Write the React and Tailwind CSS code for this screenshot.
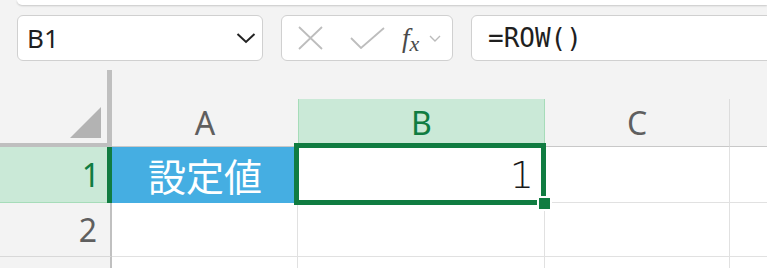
import React from 'react';

const ColHeader = ({ label, width, active, last }) => (
  <div className={`flex flex-col justify-end h-[77px] ${width}`}>
    <div
      className={`h-[48px] flex items-center justify-center border-b text-[32px] leading-none ${
        active
          ? 'bg-[#cae9d7] text-[#107c41] border-x border-x-[#a6dcb9] border-b-[#c8c8c8]'
          : last
          ? 'text-[#5f5f5f] border-r border-r-[#dcdcdc] border-b-[#c8c8c8]'
          : 'text-[#5f5f5f] border-b-[#c8c8c8]'
      }`}
    >
      {label}
    </div>
  </div>
);

export default function App() {
  return (
    <div className="relative w-[767px] h-[268px] overflow-hidden bg-[#f3f3f3] font-['Noto_Sans',sans-serif]">
      {/* top ribbon edge */}
      <div className="ml-[17px] h-[5px] bg-white rounded-bl-[10px] shadow-[0_1px_2px_rgba(0,0,0,0.18)]" />

      {/* formula bar */}
      <div className="flex gap-[18px] ml-[17px] mt-[10px] h-[46px]">
        <div className="w-[246px] shrink-0 flex items-center justify-between pl-[9px] pr-[6px] bg-white border-[1.5px] border-[#d0d0d0] rounded-[6px]">
          <span className="text-[26px] text-[#1f1f1f] leading-none">B1</span>
          <svg width="20" height="12" viewBox="0 0 20 12" fill="none">
            <path d="M1.5 2 L10 10 L18.5 2" stroke="#222" strokeWidth="2" />
          </svg>
        </div>
        <div className="w-[172px] shrink-0 flex items-center pl-[16px] bg-white border-[1.5px] border-[#d0d0d0] rounded-[6px]">
          <svg width="25" height="24" viewBox="0 0 25 24" fill="none">
            <path d="M1 1 L24 23 M24 1 L1 23" stroke="#bdbdbd" strokeWidth="1.8" />
          </svg>
          <svg className="ml-[27px]" width="35" height="22" viewBox="0 0 35 22" fill="none">
            <path d="M1 11 L11 21 L34 1" stroke="#bdbdbd" strokeWidth="1.8" />
          </svg>
          <span className="ml-[17px] font-['Liberation_Serif',serif] italic text-[27px] text-[#4a4a4a] leading-none">
            f<span className="text-[22px] relative top-[4px]">x</span>
          </span>
          <svg className="ml-[10px]" width="12" height="7" viewBox="0 0 12 7" fill="none">
            <path d="M1 1 L6 6 L11 1" stroke="#bbbbbb" strokeWidth="1.4" />
          </svg>
        </div>
        <div className="w-[330px] shrink-0 flex items-center pl-[16px] bg-white border-[1.5px] border-[#d0d0d0] rounded-[6px]">
          <span className="font-['DejaVu_Sans_Mono',monospace] text-[26px] text-[#1f1f1f] leading-none">=ROW()</span>
        </div>
      </div>

      {/* grid */}
      <div className="relative mt-[9px]">
        {/* header row */}
        <div className="flex">
          <div className="w-[112px] h-[77px] shrink-0 flex items-end justify-end pr-[6px] pb-[5px] border-r-[5px] border-b-[4px] border-[#bfbfbf]">
            <svg width="31" height="31" viewBox="0 0 31 31">
              <path d="M0 31 L31 31 L31 0 Z" fill="#b3b3b3" />
            </svg>
          </div>
          <ColHeader label="A" width="w-[186px]" />
          <ColHeader label="B" width="w-[247px]" active />
          <ColHeader label="C" width="w-[185px]" last />
          <ColHeader label="" width="flex-1" />
        </div>

        {/* row 1 */}
        <div className="flex h-[56px]">
          <div className="w-[107px] shrink-0 flex items-center justify-end pr-[7px] bg-[#cae9d7] border-b border-[#a6dcb9] text-[32px] text-[#107c41] leading-none">
            1
          </div>
          <div className="w-[5px] shrink-0 bg-[#107c41]" />
          <div className="w-[186px] shrink-0 flex items-center justify-center bg-[#45aee2] border-b border-[#45aee2] text-white text-[38px] leading-none font-['Noto_Sans_CJK_JP',sans-serif]">
            設定値
          </div>
          <div className="w-[247px] shrink-0 flex items-center justify-end pr-[10px] bg-white border-b border-r border-[#e1e1e1] font-['DejaVu_Sans',sans-serif] font-extralight text-[38px] text-[#1a1a1a] leading-none">
            1
          </div>
          <div className="w-[185px] shrink-0 bg-white border-b border-r border-[#e1e1e1]" />
          <div className="flex-1 bg-white border-b border-[#e1e1e1]" />
        </div>

        {/* row 2 */}
        <div className="flex h-[54px]">
          <div className="w-[112px] shrink-0 flex items-center justify-end pr-[13px] border-r-2 border-r-[#c0c0c0] border-b border-b-[#d8d8d8] text-[32px] text-[#5f5f5f] leading-none">
            2
          </div>
          <div className="w-[186px] shrink-0 bg-white border-b border-r border-[#e1e1e1]" />
          <div className="w-[247px] shrink-0 bg-white border-b border-r border-[#e1e1e1]" />
          <div className="w-[185px] shrink-0 bg-white border-b border-r border-[#e1e1e1]" />
          <div className="flex-1 bg-white border-b border-[#e1e1e1]" />
        </div>

        {/* row 3 */}
        <div className="flex h-[30px]">
          <div className="w-[112px] shrink-0 border-r-2 border-r-[#c0c0c0]" />
          <div className="w-[186px] shrink-0 bg-white border-r border-[#e1e1e1]" />
          <div className="w-[247px] shrink-0 bg-white border-r border-[#e1e1e1]" />
          <div className="w-[185px] shrink-0 bg-white border-r border-[#e1e1e1]" />
          <div className="flex-1 bg-white" />
        </div>

        {/* selection */}
        <div className="absolute left-[294px] top-[73px] w-[252px] h-[62px] border-[5px] border-[#107c41]" />
        <div className="absolute left-[537px] top-[126px] w-[15px] h-[15px] border-2 border-white bg-[#107c41]" />
      </div>
    </div>
  );
}
